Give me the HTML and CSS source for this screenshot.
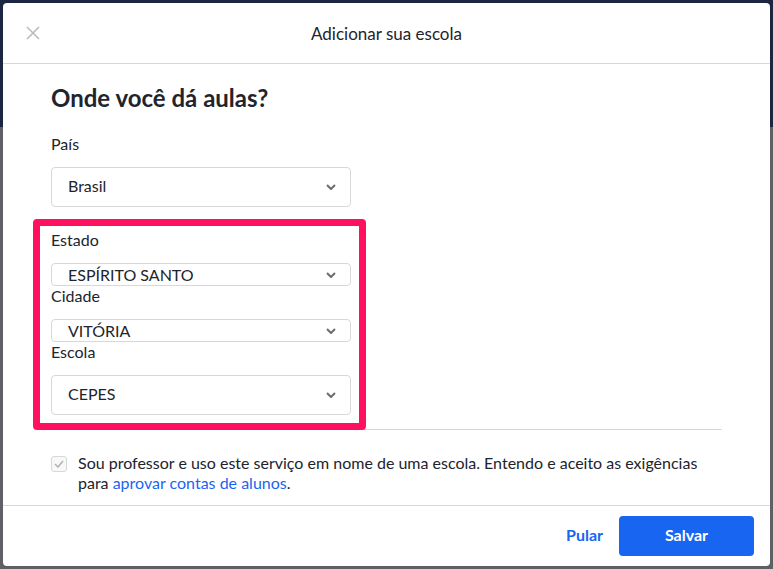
FILE: index.html
```html
<!DOCTYPE html>
<html lang="pt-BR">
<head>
  <meta charset="UTF-8" />
  <meta name="viewport" content="width=device-width, initial-scale=1.0"/>
  <title>Adicionar sua escola</title>
  <link rel="stylesheet" href="styles.css">
</head>
<body>
  <div class="modal">
    <header class="modal-header">
      <button class="close" aria-label="Fechar">
        <svg width="14" height="14" viewBox="0 0 14 14">
          <path d="M1 1 L13 13 M13 1 L1 13" stroke="#babbbe" stroke-width="1.6" fill="none"/>
        </svg>
      </button>
      <h2 class="title">Adicionar sua escola</h2>
      <span></span>
    </header>

    <div class="modal-body">
      <h1 class="heading">Onde você dá aulas?</h1>

      <div class="field">
        <label class="label">País</label>
        <div class="select">
          <span>Brasil</span>
          <svg class="chevron" width="10" height="6" viewBox="0 0 10 6"><path d="M1 1 L5 5 L9 1" stroke="#6b6d72" stroke-width="2" fill="none"/></svg>
        </div>
      </div>

      <div class="field field-tight">
        <label class="label">Estado</label>
        <div class="select select-short">
          <span>ESPÍRITO SANTO</span>
          <svg class="chevron" width="10" height="6" viewBox="0 0 10 6"><path d="M1 1 L5 5 L9 1" stroke="#6b6d72" stroke-width="2" fill="none"/></svg>
        </div>
      </div>

      <div class="field field-tight">
        <label class="label">Cidade</label>
        <div class="select select-short">
          <span>VITÓRIA</span>
          <svg class="chevron" width="10" height="6" viewBox="0 0 10 6"><path d="M1 1 L5 5 L9 1" stroke="#6b6d72" stroke-width="2" fill="none"/></svg>
        </div>
      </div>

      <div class="field field-tight">
        <label class="label">Escola</label>
        <div class="select">
          <span>CEPES</span>
          <svg class="chevron" width="10" height="6" viewBox="0 0 10 6"><path d="M1 1 L5 5 L9 1" stroke="#6b6d72" stroke-width="2" fill="none"/></svg>
        </div>
      </div>

      <hr class="divider">

      <div class="agree">
        <span class="checkbox">
          <svg width="10" height="8" viewBox="0 0 10 8"><path d="M1 4 L4 7 L9 1" stroke="#b3b4b7" stroke-width="1.6" fill="none"/></svg>
        </span>
        <p>Sou professor e uso este serviço em nome de uma escola. Entendo e aceito as exigências para <a href="#">aprovar contas de alunos</a>.</p>
      </div>

      <div class="highlight"></div>
    </div>

    <footer class="modal-footer">
      <button class="btn-link">Pular</button>
      <button class="btn-primary">Salvar</button>
    </footer>
  </div>
</body>
</html>
```

FILE: styles.css
```css
body {
  margin: 0;
  height: 569px;
  background: linear-gradient(#1b2740 0, #1b2740 127px, #5f6065 127px);
  font-family: Lato, "Open Sans", sans-serif;
  color: #21242c;
  padding: 3px 3px 0 3px;
  box-sizing: border-box;
  overflow: hidden;
}

.modal {
  width: 767px;
  background: #fff;
  border-radius: 4px;
}

.modal-header {
  display: grid;
  grid-template-columns: 60px 1fr 60px;
  align-items: center;
  height: 60px;
  border-bottom: 1px solid #d6d8da;
}

.close {
  background: none;
  border: 0;
  padding: 0;
  margin-left: 23px;
  width: 14px;
  height: 14px;
  display: flex;
}

.title {
  margin: 0;
  text-align: center;
  font-size: 17px;
  font-weight: 400;
}

.modal-body {
  position: relative;
  padding: 20px 48px 12px 48px;
}

.heading {
  margin: 0 0 22px 0;
  font-size: 24px;
  line-height: 28px;
  font-weight: 700;
}

.field {
  margin-bottom: 23px;
}

.field-tight {
  margin-bottom: 0;
}

.label {
  display: block;
  font-size: 16px;
  line-height: 20px;
  margin-bottom: 13px;
}

.select {
  width: 300px;
  height: 40px;
  box-sizing: border-box;
  border: 1px solid #d6d8da;
  border-radius: 4px;
  display: flex;
  align-items: center;
  justify-content: space-between;
  padding: 0 14px 3px 16px;
  font-size: 16px;
  overflow: hidden;
}

.select .chevron {
  margin-top: 3px;
}

.select-short {
  height: 23px;
  padding-bottom: 1px;
}

.select-short .chevron {
  margin-top: 1px;
}

.divider {
  border: 0;
  border-top: 1px solid #d6d8da;
  margin: 14px 0 23px 0;
}

.agree {
  display: flex;
  gap: 11px;
}

.agree p {
  margin: 0;
  font-size: 16px;
  line-height: 20px;
}

.agree a {
  color: #1865f2;
  text-decoration: none;
}

.checkbox {
  flex: none;
  width: 16px;
  height: 16px;
  margin-top: 3px;
  box-sizing: border-box;
  border: 1px solid #d6d8da;
  border-radius: 3px;
  background: #f7f8fa;
  display: flex;
  align-items: center;
  justify-content: center;
}

/* annotation box drawn over the state / city / school fields */
.highlight {
  position: absolute;
  left: 30px;
  top: 155px;
  width: 333px;
  height: 211px;
  box-sizing: border-box;
  border: 7px solid #ff1160;
  border-radius: 4px;
}

.modal-footer {
  border-top: 1px solid #d6d8da;
  height: 60px;
  display: flex;
  align-items: center;
  justify-content: flex-end;
  padding-right: 16px;
}

.btn-link {
  background: none;
  border: 0;
  padding: 0 0 3px 0;
  margin-right: 16px;
  color: #1865f2;
  font: 700 16px Lato, sans-serif;
}

.btn-primary {
  width: 135px;
  height: 40px;
  border: 0;
  border-radius: 4px;
  padding: 0 0 3px 0;
  background: #1865f2;
  color: #fff;
  font: 700 16px Lato, sans-serif;
}
```
